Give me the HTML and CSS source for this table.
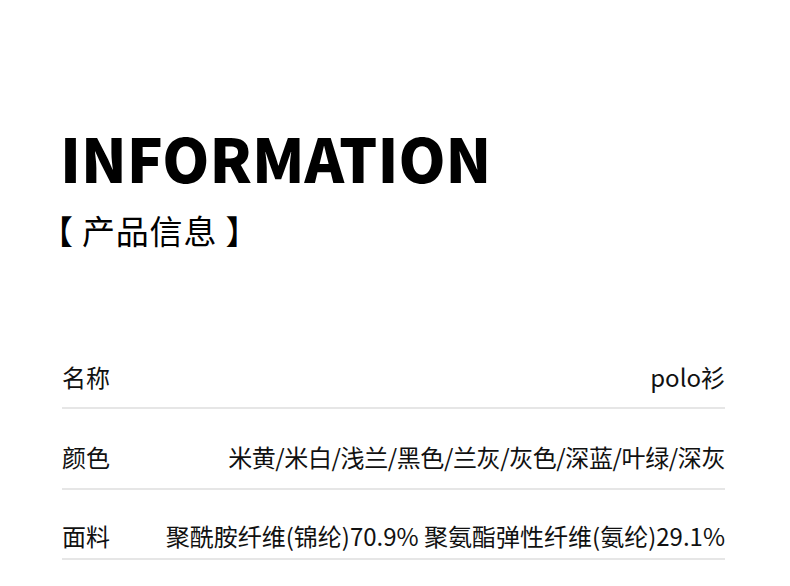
FILE: index.html
```html
<!DOCTYPE html>
<html lang="zh-CN">
<head>
<meta charset="utf-8">
<link rel="stylesheet" href="styles.css">
</head>
<body>
<div class="page">
  <header class="head">
    <h1 class="title">INFORMATION</h1>
    <p class="subtitle">【 产品信息 】</p>
  </header>
  <section class="table">
    <div class="row row-name">
      <span class="label">名称</span>
      <span class="value">polo衫</span>
    </div>
    <div class="row row-color">
      <span class="label">颜色</span>
      <span class="value value-tight">米黄/米白/浅兰/黑色/兰灰/灰色/深蓝/叶绿/深灰</span>
    </div>
    <div class="row row-fabric">
      <span class="label">面料</span>
      <span class="value">聚酰胺纤维(锦纶)70.9% 聚氨酯弹性纤维(氨纶)29.1%</span>
    </div>
  </section>
</div>
</body>
</html>
```

FILE: styles.css
```css
* { box-sizing: border-box; }
html, body { margin: 0; padding: 0; background: #fff; }
body {
  font-family: "Noto Sans CJK SC", "Noto Sans", sans-serif;
  color: #111;
  width: 790px;
  height: 586px;
  overflow: hidden;
}
.page {
  padding: 127px 65px 0 60px;
}
.title {
  margin: 0;
  font-size: 60px;
  line-height: 60px;
  font-weight: 900;
  color: #000;
  letter-spacing: 0;
}
.subtitle {
  margin: 23px 0 0 -20px;
  font-size: 33px;
  line-height: 40px;
  font-weight: 400;
  color: #000;
  letter-spacing: 0.8px;
}
.table {
  margin: 97px 0 0 2px;
}
.row {
  display: flex;
  justify-content: space-between;
  align-items: flex-start;
  border-bottom: 2px solid #e6e6e6;
  font-size: 24px;
  line-height: 30px;
}
.row-name { height: 62px; padding-top: 15px; }
.row-color { height: 81px; padding-top: 33px; }
.row-fabric { height: 70px; padding-top: 31px; }
.label { color: #111; }
.value { color: #111; text-align: right; }
.value-tight { letter-spacing: -0.4px; }
```
